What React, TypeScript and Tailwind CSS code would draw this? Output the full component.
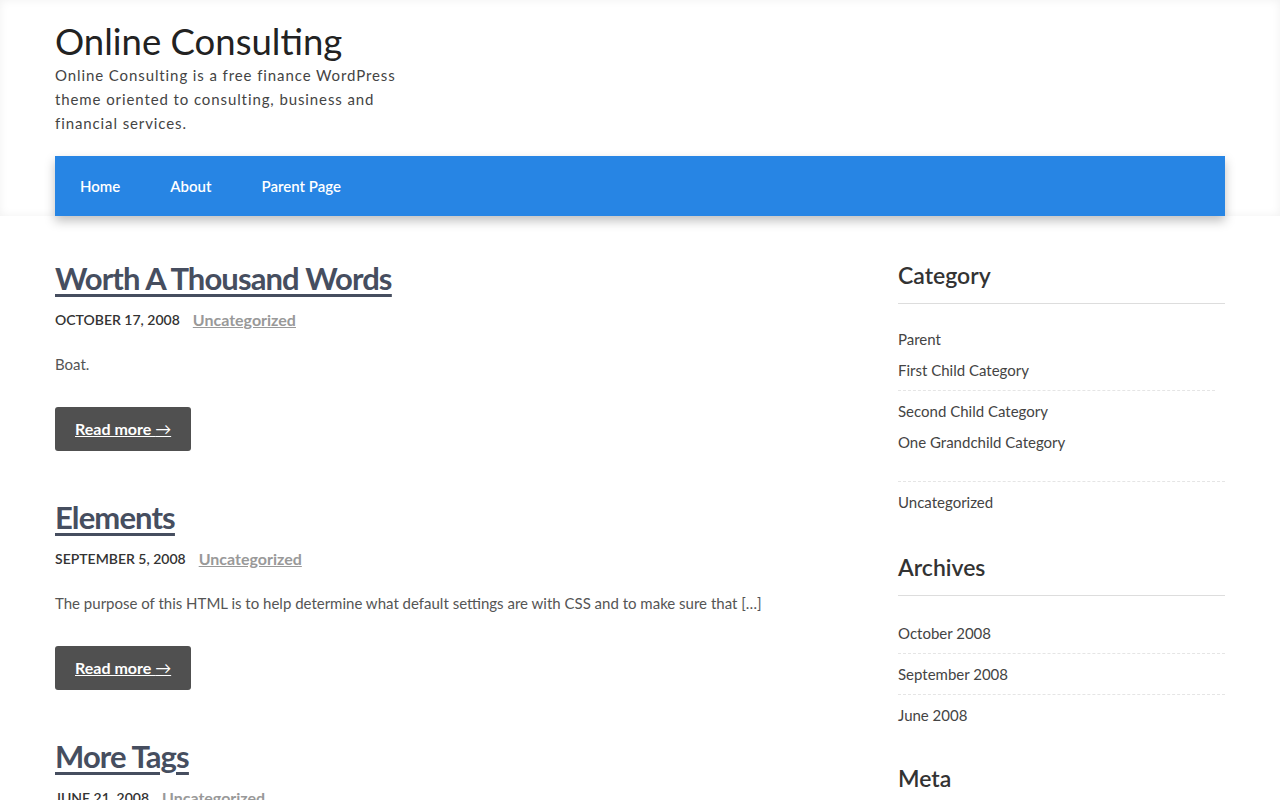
import React from 'react';

type Post = {
  title: string;
  date: string;
  category: string;
  excerpt: string;
};

const posts: Post[] = [
  { title: 'Worth A Thousand Words', date: 'October 17, 2008', category: 'Uncategorized', excerpt: 'Boat.' },
  {
    title: 'Elements',
    date: 'September 5, 2008',
    category: 'Uncategorized',
    excerpt:
      'The purpose of this HTML is to help determine what default settings are with CSS and to make sure that […]',
  },
  { title: 'More Tags', date: 'June 21, 2008', category: 'Uncategorized', excerpt: 'Tags.' },
];

const archives = ['October 2008', 'September 2008', 'June 2008'];

const PostItem: React.FC<{ post: Post }> = ({ post }) => (
  <article className="mb-[46px]">
    <h2 className="text-[31px] font-bold leading-[40px] tracking-[-0.9px] text-[#464e5f] underline decoration-[3px] underline-offset-[4px]">
      <a href="#">{post.title}</a>
    </h2>
    <div className="mt-[12px] flex items-center gap-[13px] leading-[20px]">
      <span className="text-[14px] font-semibold uppercase text-[#333]">{post.date}</span>
      <a href="#" className="text-[16px] font-bold text-[#999] underline">
        {post.category}
      </a>
    </div>
    <p className="mt-[22px] text-[15px] leading-[24px] text-[#555]">{post.excerpt}</p>
    <a
      href="#"
      className="mt-[31px] inline-block rounded-[3px] bg-[#505050] px-[20px] py-[10px] text-[16px] font-bold leading-[24px] text-white underline"
    >
      Read more <span className="font-normal">→</span>
    </a>
  </article>
);

const WidgetTitle: React.FC<{ children: React.ReactNode }> = ({ children }) => (
  <h3 className="border-b border-[#ddd] pb-[13px] text-[23px] font-semibold leading-[30px] text-[#333]">{children}</h3>
);

export default function App() {
  return (
    <div className="min-h-screen bg-white font-['Lato',sans-serif]">
      <header className="shadow-[inset_0_0_10px_rgba(0,0,0,0.06)]">
        <div className="mx-auto w-[1170px] pt-[19px]">
          <h1 className="text-[36.5px] font-normal leading-[44px] text-[#222]">Online Consulting</h1>
          <p className="w-[360px] text-[15px] leading-[24px] tracking-[0.9px] text-[#444]">
            Online Consulting is a free finance WordPress theme oriented to consulting, business and financial
            services.
          </p>
          <nav className="relative z-10 mb-[-6px] mt-[21px] flex h-[60px] items-center bg-[#2785e4] shadow-[0_5px_10px_rgba(0,0,0,0.25)]">
            {['Home', 'About', 'Parent Page'].map((item) => (
              <a key={item} href="#" className="px-[25px] text-[15px] font-semibold leading-[60px] text-white">
                {item}
              </a>
            ))}
          </nav>
        </div>
      </header>

      <main className="mx-auto flex w-[1170px] justify-between pt-[48px]">
        <div className="w-[780px]">
          {posts.map((post) => (
            <PostItem key={post.title} post={post} />
          ))}
        </div>

        <aside className="w-[327px] pt-[2px]">
          <section className="mb-[39px]">
            <WidgetTitle>Category</WidgetTitle>
            <ul className="mt-[25px] text-[15px] leading-[21px] text-[#444]">
              <li className="pb-[28px]">
                <a href="#">Parent</a>
                <ul className="mt-[10px] pr-[10px]">
                  <li className="border-b border-dashed border-[#e5e5e5] pb-[9px]">
                    <a href="#">First Child Category</a>
                  </li>
                  <li className="pt-[10px]">
                    <a href="#">Second Child Category</a>
                    <ul className="mt-[10px]">
                      <li>
                        <a href="#">One Grandchild Category</a>
                      </li>
                    </ul>
                  </li>
                </ul>
              </li>
              <li className="border-t border-dashed border-[#e5e5e5] pt-[10px]">
                <a href="#">Uncategorized</a>
              </li>
            </ul>
          </section>

          <section className="mb-[28px]">
            <WidgetTitle>Archives</WidgetTitle>
            <ul className="mt-[17px] text-[15px] leading-[20px] text-[#444]">
              {archives.map((a, i) => (
                <li
                  key={a}
                  className={
                    i < archives.length - 1 ? 'border-b border-dashed border-[#e5e5e5] py-[10px]' : 'py-[10px]'
                  }
                >
                  <a href="#">{a}</a>
                </li>
              ))}
            </ul>
          </section>

          <section>
            <WidgetTitle>Meta</WidgetTitle>
          </section>
        </aside>
      </main>
    </div>
  );
}
